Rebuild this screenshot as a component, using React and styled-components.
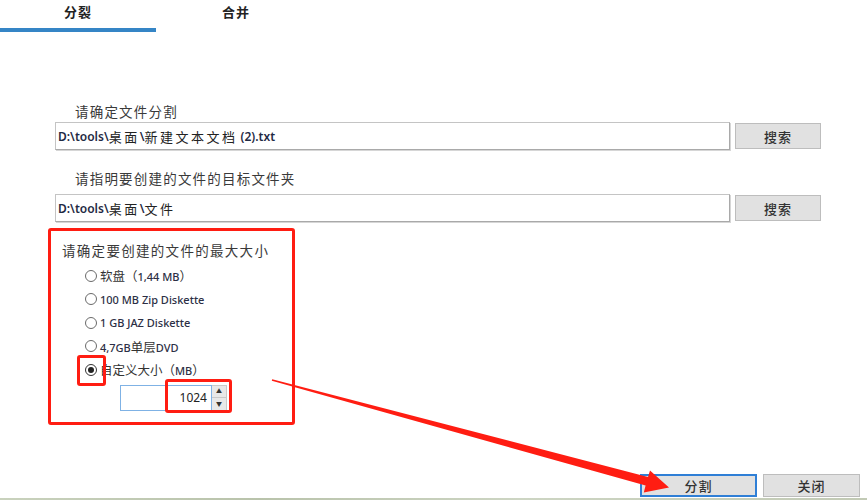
import React from "react";
import styled, { createGlobalStyle } from "styled-components";

const Global = createGlobalStyle`
  html, body { margin: 0; padding: 0; background: #fff; }
  body { font-family: "Noto Sans", "Noto Sans CJK SC", sans-serif; }
  * { box-sizing: border-box; }
`;

const Page = styled.div`
  position: relative;
  width: 867px;
  height: 500px;
  overflow: hidden;
  background: #fff;
  display: flex;
  flex-direction: column;
`;

const TabBar = styled.div`
  display: flex;
  height: 33px;
  flex: none;
`;

const Tab = styled.div`
  width: ${(p) => (p.$first ? 156 : 160)}px;
  height: 32px;
  padding-top: 3px;
  text-align: center;
  font-family: "Noto Sans CJK SC", sans-serif;
  font-weight: 700;
  font-size: 13px;
  line-height: 18px;
  letter-spacing: 1px;
  color: #222;
  border-bottom: 4px solid ${(p) => (p.$active ? "#3585c6" : "transparent")};
`;

const Content = styled.div`
  margin-left: 48px;
  display: flex;
  flex-direction: column;
`;

const Label = styled.div`
  margin-top: ${(p) => p.$mt}px;
  margin-left: 27px;
  height: 20px;
  line-height: 20px;
  font-family: "Noto Sans CJK SC", sans-serif;
  font-size: 13.5px;
  letter-spacing: 1.2px;
  color: #3a3a3a;
`;

const PathRow = styled.div`
  margin-top: ${(p) => p.$mt}px;
  margin-left: 7px;
  display: flex;
  align-items: center;
  gap: 5px;
  height: 28px;
`;

const PathInput = styled.div`
  width: 675px;
  height: 28px;
  padding-left: 2px;
  border: 1px solid #c4c4c4;
  border-right-color: #a9a9a9;
  border-bottom-color: #a9a9a9;
  box-shadow: 1px 1px 0 #d6d6d6;
  display: flex;
  align-items: center;
  font-family: "Noto Sans", "Noto Sans CJK SC", sans-serif;
  font-size: 12px;
  font-weight: 600;
  color: #1f2a44;
  white-space: pre;
`;

const Cjk = styled.span`
  font-family: "Noto Sans CJK SC", sans-serif;
  font-weight: 400;
  font-size: 13px;
  letter-spacing: 2.5px;
  color: #222;
`;

const Button = styled.div`
  width: ${(p) => p.$w}px;
  height: ${(p) => p.$h}px;
  background: #e1e1e1;
  border: ${(p) => (p.$focused ? "2px solid #2f7fd6" : "1px solid #bdbdbd")};
  display: flex;
  align-items: center;
  justify-content: center;
  font-family: "Noto Sans CJK SC", sans-serif;
  font-size: 13px;
  font-weight: 500;
  letter-spacing: 1px;
  color: #333;
`;

const SizeGroup = styled.div`
  margin-top: 6px;
  width: 247px;
  height: 197px;
  border: 3px solid #ff1d12;
  border-radius: 3px;
  padding-top: 9px;
  display: flex;
  flex-direction: column;
`;

const GroupTitle = styled.div`
  margin-left: 11px;
  height: 20px;
  line-height: 20px;
  font-family: "Noto Sans CJK SC", sans-serif;
  font-size: 13.5px;
  letter-spacing: 1.3px;
  color: #3a3a3a;
`;

const RadioList = styled.div`
  margin-top: 4px;
  margin-left: 34px;
  display: flex;
  flex-direction: column;
`;

const RadioRow = styled.div`
  height: 23.5px;
  display: flex;
  align-items: center;
  gap: 3px;
  font-family: "Noto Sans", "Noto Sans CJK SC", sans-serif;
  font-size: 11px;
  font-weight: 500;
  color: #2c2f45;
  white-space: pre;
`;

const RadioCircle = styled.span`
  position: relative;
  flex: none;
  width: 12px;
  height: 12px;
  border-radius: 50%;
  border: 1px solid ${(p) => (p.$checked ? "#333" : "#6a6a6a")};
  background: #fff;
  &::after {
    content: "";
    display: ${(p) => (p.$checked ? "block" : "none")};
    position: absolute;
    left: 2px;
    top: 2px;
    width: 6px;
    height: 6px;
    border-radius: 50%;
    background: #222;
  }
`;

const RadioText = styled.span`
  font-family: "Noto Sans CJK SC", sans-serif;
  font-weight: 400;
  font-size: 12.5px;
  color: #333;
`;

const Highlight = styled.span`
  position: absolute;
  left: ${(p) => p.$l}px;
  top: ${(p) => p.$t}px;
  width: ${(p) => p.$w}px;
  height: ${(p) => p.$h}px;
  border: 3px solid #ff1d12;
  border-radius: 3px;
  pointer-events: none;
`;

const SpinRow = styled.div`
  position: relative;
  margin-top: 3px;
  margin-left: 69px;
  display: flex;
  height: 26px;
`;

const SpinField = styled.div`
  width: 92px;
  height: 26px;
  border: 1px solid #7fb2e5;
  background: #fff;
  display: flex;
  align-items: center;
  justify-content: flex-end;
  padding-right: 4px;
  font-family: "Noto Sans", sans-serif;
  font-size: 12px;
  color: #222;
`;

const SpinButtons = styled.div`
  width: 15px;
  height: 26px;
  display: flex;
  flex-direction: column;
  border: 1px solid #c9c9c9;
  border-left: none;
`;

const SpinHalf = styled.div`
  flex: 1;
  background: #e8e8e8;
  border-bottom: ${(p) => (p.$top ? "1px solid #c9c9c9" : "none")};
  display: flex;
  align-items: center;
  justify-content: center;
  font-size: 6px;
  line-height: 1;
  color: #333;
`;

const ActionRow = styled.div`
  margin-top: 49px;
  padding-right: 7px;
  display: flex;
  justify-content: flex-end;
  gap: 6px;
`;

const BottomEdge = styled.div`
  margin-top: 1px;
  height: 3px;
  background: linear-gradient(90deg, #c9d2bd, #b9c3ab 30%, #cdd5c3 60%, #c2cab5);
`;

const ArrowLayer = styled.svg`
  position: absolute;
  left: 0;
  top: 0;
  width: 867px;
  height: 500px;
  pointer-events: none;
`;

const radios = [
  { cjk: "软盘（", rest: "1,44 MB", post: "）" },
  { rest: "100 MB Zip Diskette" },
  { rest: "1 GB JAZ Diskette" },
  { pre: "4,7GB", cjk: "单层", rest: "DVD" },
  { cjk: "自定义大小（", rest: "MB", post: "）", checked: true },
];

export default function App() {
  return (
    <Page>
      <Global />
      <TabBar>
        <Tab $first $active>分裂</Tab>
        <Tab>合并</Tab>
      </TabBar>
      <Content>
        <Label $mt={68}>请确定文件分割</Label>
        <PathRow $mt={1}>
          <PathInput>
            D:\tools\<Cjk>桌面</Cjk>\<Cjk>新建文本文档</Cjk> (2).txt
          </PathInput>
          <Button $w={86} $h={26}>搜索</Button>
        </PathRow>
        <Label $mt={18}>请指明要创建的文件的目标文件夹</Label>
        <PathRow $mt={6}>
          <PathInput>
            D:\tools\<Cjk>桌面</Cjk>\<Cjk>文件</Cjk>
          </PathInput>
          <Button $w={86} $h={26}>搜索</Button>
        </PathRow>
        <SizeGroup>
          <GroupTitle>请确定要创建的文件的最大大小</GroupTitle>
          <RadioList>
            {radios.map((r, i) => (
              <RadioRow key={i}>
                <RadioCircle $checked={r.checked}>
                  {r.checked && <Highlight $l={-9} $t={-10} $w={29} $h={31} />}
                </RadioCircle>
                <span>
                  {r.pre}
                  {r.cjk && <RadioText>{r.cjk}</RadioText>}
                  {r.rest}
                  {r.post && <RadioText>{r.post}</RadioText>}
                </span>
              </RadioRow>
            ))}
          </RadioList>
          <SpinRow>
            <SpinField>1024</SpinField>
            <SpinButtons>
              <SpinHalf $top>▲</SpinHalf>
              <SpinHalf>▼</SpinHalf>
            </SpinButtons>
            <Highlight $l={45} $t={-6} $w={67} $h={34} />
          </SpinRow>
        </SizeGroup>
      </Content>
      <ActionRow>
        <Button $w={117} $h={23} $focused>分割</Button>
        <Button $w={97} $h={23}>关闭</Button>
      </ActionRow>
      <BottomEdge />
      <ArrowLayer viewBox="0 0 867 500">
        <polygon
          points="272.2,379.3 648,477 650,470.5 669,487.5 643.8,492.5 645.6,485.6 271.8,380.7"
          fill="#ff1d12"
        />
      </ArrowLayer>
    </Page>
  );
}
